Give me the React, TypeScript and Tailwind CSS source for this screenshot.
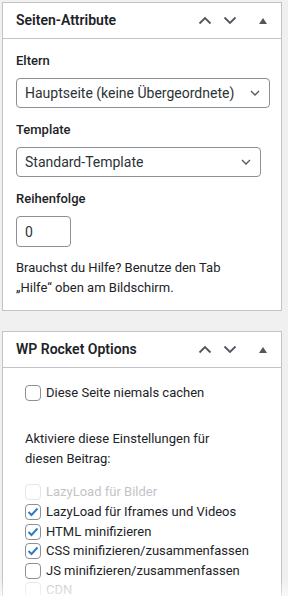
const font = { fontFamily: "Roboto, 'Noto Sans', sans-serif" }

const Chevron = ({ up }: { up?: boolean }) => (
  <svg width="14" height="9" viewBox="0 0 14 9" className="text-[#50575e]">
    <path
      d={up ? "M1.5 7.5 L7 2 L12.5 7.5" : "M1.5 1.5 L7 7 L12.5 1.5"}
      fill="none"
      stroke="currentColor"
      strokeWidth="1.8"
    />
  </svg>
)

const PanelHeader = ({ title }: { title: string }) => (
  <div className="flex h-[36px] items-center border-b border-[#c3c4c7] pl-[13px] pr-[14px]">
    <h2 className="flex-1 text-[14px] font-semibold text-[#1d2327]">{title}</h2>
    <div className="flex items-center">
      <Chevron up />
      <span className="w-[11px]" />
      <Chevron />
      <span className="w-[22px]" />
      <svg width="8" height="6" viewBox="0 0 8 6">
        <path d="M0 6 L4 0 L8 6 Z" fill="#50575e" />
      </svg>
    </div>
  </div>
)

const Select = ({ value, width }: { value: string; width: string }) => (
  <div
    className={`flex h-[30px] items-center rounded-[4px] border border-[#8c8f94] bg-white pl-[8px] pr-[9px] text-[14px] text-[#2c3338] ${width}`}
  >
    <span className="flex-1 whitespace-nowrap">{value}</span>
    <svg width="10" height="6" viewBox="0 0 10 6">
      <path d="M1 1 L5 5 L9 1" fill="none" stroke="#50575e" strokeWidth="1.3" />
    </svg>
  </div>
)

const Box = ({ checked, disabled }: { checked?: boolean; disabled?: boolean }) => (
  <span
    className={`flex h-[16px] w-[16px] shrink-0 items-center justify-center rounded-[4px] border bg-white ${
      disabled ? "border-[#e4e5e7]" : "border-[#8c8f94]"
    }`}
  >
    {checked && (
      <svg width="12" height="10" viewBox="0 0 12 10">
        <path d="M1.5 5 L4.5 8 L10.5 1.5" fill="none" stroke="#2c7fc6" strokeWidth="2" />
      </svg>
    )}
  </span>
)

const Option = ({ label, checked, disabled }: { label: string; checked?: boolean; disabled?: boolean }) => (
  <div className="flex h-[19.6px] items-center gap-[5px]">
    <Box checked={checked} disabled={disabled} />
    <span className={disabled ? "text-[#c3c4c7]" : "text-[#1d2327]"}>{label}</span>
  </div>
)

export default function App() {
  return (
    <div className="relative h-[596px] w-[288px] overflow-hidden bg-[#f0f0f1] pl-[2px] pt-[2px]" style={font}>
      <div className="w-[280px] border border-[#c3c4c7] bg-white">
        <PanelHeader title="Seiten-Attribute" />
        <div className="px-[13px] pb-[12px] pt-[12px] text-[13px] leading-[20px] text-[#1d2327]">
          <p className="mb-[7px] font-medium">Eltern</p>
          <Select value="Hauptseite (keine Übergeordnete)" width="w-[254px]" />
          <p className="mb-[7px] mt-[12px] font-medium">Template</p>
          <Select value="Standard-Template" width="w-[245px]" />
          <p className="mb-[7px] mt-[12px] font-medium">Reihenfolge</p>
          <div className="flex h-[31px] w-[55px] items-center rounded-[4px] border border-[#8c8f94] pl-[8px] text-[14px] text-[#2c3338]">
            0
          </div>
          <p className="mt-[11px]">
            Brauchst du Hilfe? Benutze den Tab
            <br />
            „Hilfe“ oben am Bildschirm.
          </p>
        </div>
      </div>

      <div className="mt-[20px] w-[280px] border border-[#c3c4c7] bg-white">
        <PanelHeader title="WP Rocket Options" />
        <div className="pl-[22px] pt-[15px] text-[13px] leading-[20px] text-[#1d2327]">
          <Option label="Diese Seite niemals cachen" />
          <p className="mt-[26px]">
            Aktiviere diese Einstellungen für
            <br />
            diesen Beitrag:
          </p>
          <div className="mt-[14px]">
            <Option label="LazyLoad für Bilder" disabled />
            <Option label="LazyLoad für Iframes und Videos" checked />
            <Option label="HTML minifizieren" checked />
            <Option label="CSS minifizieren/zusammenfassen" checked />
            <Option label="JS minifizieren/zusammenfassen" />
            <Option label="CDN" disabled />
          </div>
        </div>
      </div>

      <div className="pointer-events-none absolute bottom-0 left-0 h-[16px] w-full bg-gradient-to-b from-white/0 to-white/60" />
    </div>
  )
}
